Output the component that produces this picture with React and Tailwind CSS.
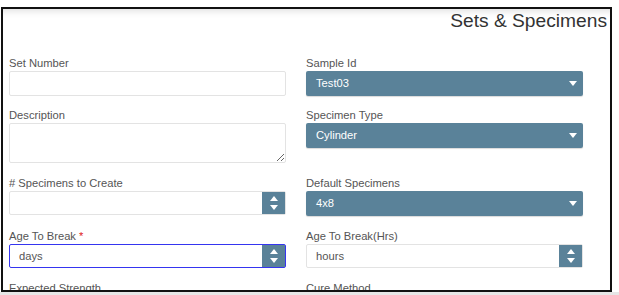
import React from 'react'

const BLUE = 'bg-[#5a8299]'

function Caret({ up = false }) {
  return (
    <svg width="8" height="5" viewBox="0 0 8 5" className="block">
      {up
        ? <polygon points="0,5 8,5 4,0" fill="#fff" />
        : <polygon points="0,0 8,0 4,5" fill="#fff" />}
    </svg>
  )
}

function Label({ children, required }) {
  return (
    <label className="block h-[15px] leading-[15px] text-[11.2px] text-[#555] whitespace-nowrap">
      {children}
      {required && <span className="text-[#e02424]"> *</span>}
    </label>
  )
}

function TextInput() {
  return <div className="h-[25px] border border-[#e3e3e3] rounded-[2px] bg-white" />
}

function TextArea() {
  return (
    <textarea
      className="block w-full h-[40px] border border-[#e3e3e3] rounded-[2px] bg-white outline-none"
    />
  )
}

function Select({ value }) {
  return (
    <div className={`h-[25px] ${BLUE} rounded-[2px] shadow-[0_1px_1px_rgba(0,0,0,0.15)] flex items-center justify-between pl-[10px] pr-[6px]`}>
      <span className="text-[11.2px] text-white">{value}</span>
      <Caret />
    </div>
  )
}

function Spinner({ value = '', focused = false }) {
  return (
    <div
      className={`h-[24px] rounded-[2px] bg-white flex items-stretch border ${
        focused ? 'border-[#3535f0]' : 'border-[#e3e3e3]'
      }`}
    >
      <span className="flex-1 pl-[9px] flex items-center text-[11.2px] text-[#555]">{value}</span>
      <div className={`w-[23px] ${BLUE} flex flex-col items-center justify-center gap-[4px]`}>
        <Caret up />
        <Caret />
      </div>
    </div>
  )
}

function Field({ label, required, className = '', children }) {
  return (
    <div className={className}>
      <Label required={required}>{label}</Label>
      {children}
    </div>
  )
}

export default function App() {
  return (
    <div className="w-[619px] h-[295px] bg-white font-['Liberation_Sans',Arial,sans-serif] overflow-hidden">
      <div className="pt-[7px]">
        <div className="ml-[1px] w-[611px] h-[285px] border-2 border-[#111] bg-white overflow-hidden shadow-[inset_0_8px_7px_-6px_rgba(0,0,0,0.13)]">
          {/* Header */}
          <h1 className="text-right pr-[3px] text-[19.2px] leading-[23px] text-[#333]">Sets &amp; Specimens</h1>

          {/* Form */}
          <div className="mt-[24px] pl-[6px] grid grid-cols-[277px_277px] gap-x-[20px] gap-y-[13px] items-start">
            <Field label="Set Number" className="-mb-px"><TextInput /></Field>
            <Field label="Sample Id" className="-mb-px"><Select value="Test03" /></Field>

            <Field label="Description"><TextArea /></Field>
            <Field label="Specimen Type"><Select value="Cylinder" /></Field>

            <Field label="# Specimens to Create"><Spinner /></Field>
            <Field label="Default Specimens"><Select value="4x8" /></Field>

            <Field label="Age To Break" required><Spinner value="days" focused /></Field>
            <Field label="Age To Break(Hrs)"><Spinner value="hours" /></Field>

            <Field label="Expected Strength"><TextInput /></Field>
            <Field label="Cure Method"><Select value="" /></Field>
          </div>
        </div>
      </div>
      <div className="h-[3px] bg-[#e6e6e6]" />
    </div>
  )
}
